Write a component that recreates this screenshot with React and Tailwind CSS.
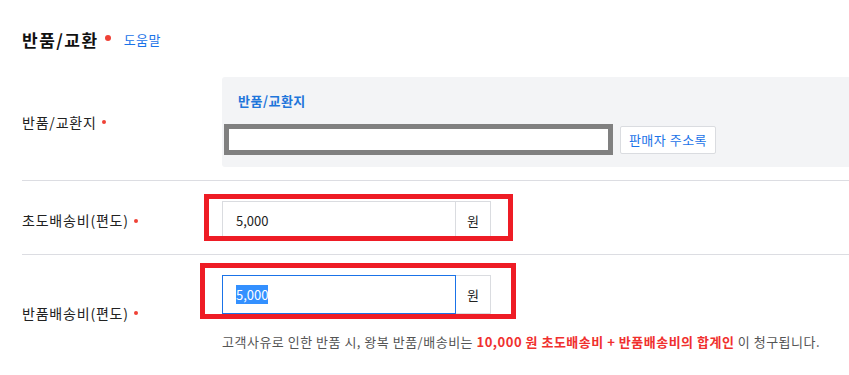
const FONT = { fontFamily: '"Noto Sans CJK KR", "Noto Sans", sans-serif' };

function Dot({ big = false }) {
  return (
    <span
      className={`block shrink-0 rounded-full bg-[#ef4136] ${big ? "h-[6px] w-[6px]" : "h-[4px] w-[4px]"}`}
    />
  );
}

function Label({ children }) {
  return (
    <div className="flex w-[200px] shrink-0 items-center gap-[5px] text-[14px] tracking-[0.8px] text-[#222]">
      <span>{children}</span>
      <Dot />
    </div>
  );
}

function FeeInput({ focused = false }) {
  return (
    <div className="flex h-[39px] w-[269px]">
      <div
        className={`flex w-[234px] items-center bg-white pl-[13px] text-[13px] text-[#222] ${
          focused ? "border border-[#1a73e8]" : "border border-[#dadce0]"
        }`}
      >
        {focused ? (
          <span className="bg-[#3390ff] leading-[19px] text-white">5,000</span>
        ) : (
          <span>5,000</span>
        )}
      </div>
      <div className="flex w-[35px] items-center justify-center border border-l-0 border-[#dadce0] bg-white text-[13px] text-[#222]">
        원
      </div>
    </div>
  );
}

export default function App() {
  return (
    <div className="min-h-screen bg-white pl-[22px]" style={FONT}>
      <div className="flex h-[77px] items-start pt-[27px]">
        <h2 className="text-[17px] font-bold leading-[26px] tracking-[1.5px] text-[#111]">반품/교환</h2>
        <span className="ml-[6px] mt-[8px]">
          <Dot big />
        </span>
        <a className="ml-[13px] text-[13px] leading-[26px] tracking-[0.5px] text-[#1a73e8]">도움말</a>
      </div>

      <div className="flex items-center border-b border-[#dcdde2] pb-[13px]">
        <Label>반품/교환지</Label>
        <div className="flex-1 rounded-l-[3px] bg-[#f3f4f6] pb-[12px] pt-[15px]">
          <div className="pl-[16px] text-[13px] font-bold leading-[18px] tracking-[0.5px] text-[#1f76db]">반품/교환지</div>
          <div className="mt-[14px] flex items-center pl-[2px]">
            <div className="h-[31px] w-[389px] border-[5px] border-[#808080] bg-white" />
            <button className="ml-[7px] h-[28px] w-[96px] rounded-[2px] border border-[#dadce0] bg-white text-[13px] tracking-[0.5px] text-[#1a73e8]">
              판매자 주소록
            </button>
          </div>
        </div>
      </div>

      <div className="flex items-center border-b border-[#dcdde2] pb-[14px] pt-[20px]">
        <Label>초도배송비(편도)</Label>
        <div className="relative">
          <FeeInput />
          <div className="absolute left-[-18px] top-[-7px] h-[47px] w-[309px] border-[5px] border-[#ee1c25]" />
        </div>
      </div>

      <div className="flex items-center pt-[20px]">
        <Label>반품배송비(편도)</Label>
        <div>
          <div className="relative w-fit">
            <FeeInput focused />
            <div className="absolute left-[-22px] top-[-12px] h-[56px] w-[316px] border-[5px] border-[#ee1c25]" />
          </div>
          <p className="mt-[19px] whitespace-nowrap text-[13px] leading-[18px] tracking-[0.5px] text-[#555]">
            고객사유로 인한 반품 시, 왕복 반품/배송비는{" "}
            <span className="font-bold text-[#f0302e]">10,000 원 초도배송비 + 반품배송비의 합계인</span> 이 청구됩니다.
          </p>
        </div>
      </div>
    </div>
  );
}
